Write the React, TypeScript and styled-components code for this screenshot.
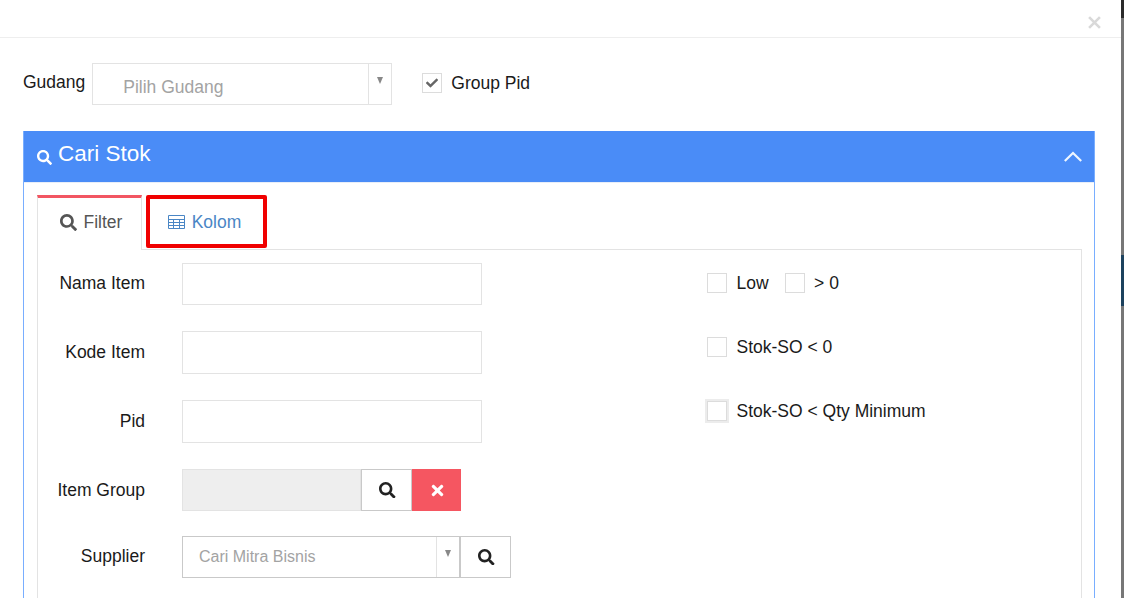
import { createGlobalStyle, styled } from "styled-components";
import { FaCheck, FaSearch, FaTimes } from "react-icons/fa";

const GlobalStyle = createGlobalStyle`
  html, body {
    margin: 0;
    height: 598px;
    overflow: hidden;
    background: #fff;
  }
  body {
    font-family: "Liberation Sans", Arial, sans-serif;
    font-size: 17.5px;
    color: #1a1a1a;
  }
`;

const textFields = [
  { name: "Nama Item", height: 42, line: 41 },
  { name: "Kode Item", height: 43, line: 42 },
  { name: "Pid", height: 43, line: 42 },
];

const stockFilters = [["Low", "> 0"], ["Stok-SO < 0"], ["Stok-SO < Qty Minimum"]];

export default function App() {
  return (
    <Page>
      <GlobalStyle />
      <Modal>
        <ModalHeader>
          <CloseIcon />
        </ModalHeader>
        <ModalBody>
          <TopRow>
            <TopLabel>Gudang</TopLabel>
            <Select $width={300} $muted>
              <SelectValue $indent={30} $size={17.5} $line={47}>
                Pilih Gudang
              </SelectValue>
              <Caret />
            </Select>
            <GroupOption>
              <CheckBox $dotted>
                <FaCheck />
              </CheckBox>
              Group Pid
            </GroupOption>
          </TopRow>

          <Panel>
            <PanelHeader>
              <PanelTitle>
                <FaSearch />
                Cari Stok
              </PanelTitle>
              <Chevron viewBox="0 0 18 11">
                <polyline points="0.8,10 9,2 17.2,10" />
              </Chevron>
            </PanelHeader>
            <PanelBody>
              <Tabs>
                <ActiveTab>
                  <FaSearch />
                  Filter
                </ActiveTab>
                <LinkTab>
                  <TableIcon />
                  Kolom
                </LinkTab>
              </Tabs>
              <TabContent>
                <FieldColumn>
                  {textFields.map((f) => (
                    <FieldRow key={f.name} $height={f.height} $line={f.line}>
                      <FieldLabel>{f.name}</FieldLabel>
                      <TextInput />
                    </FieldRow>
                  ))}
                  <FieldRow $height={42} $line={42}>
                    <FieldLabel>Item Group</FieldLabel>
                    <ReadOnlyInput />
                    <IconButton>
                      <FaSearch />
                    </IconButton>
                    <ClearButton>
                      <FaTimes />
                    </ClearButton>
                  </FieldRow>
                  <SupplierRow $height={42} $line={40}>
                    <FieldLabel>Supplier</FieldLabel>
                    <Select $width={278}>
                      <SelectValue $indent={16} $size={16} $line={39}>
                        Cari Mitra Bisnis
                      </SelectValue>
                      <Caret />
                    </Select>
                    <IconButton>
                      <FaSearch />
                    </IconButton>
                  </SupplierRow>
                </FieldColumn>
                <OptionColumn>
                  {stockFilters.map((group, i) => (
                    <OptionRow key={group[0]}>
                      {group.map((label) => (
                        <CheckOption key={label}>
                          <CheckBox $focused={i === 2} $dotted />
                          {label}
                        </CheckOption>
                      ))}
                    </OptionRow>
                  ))}
                </OptionColumn>
              </TabContent>
            </PanelBody>
          </Panel>
        </ModalBody>
      </Modal>
      <Scrollbar />
    </Page>
  );
}

function CloseIcon() {
  return (
    <Close viewBox="0 0 12 12">
      <path d="M1 1 L11 11 M11 1 L1 11" />
    </Close>
  );
}

function TableIcon() {
  return (
    <GridIcon viewBox="0 0 17 14">
      <path d="M.5.5h16v13H.5z" />
      <path d="M.5 4.5h16M.5 7.5h16M.5 10.5h16M5.5 4.5v9M11.5 4.5v9" />
    </GridIcon>
  );
}

function Caret() {
  return (
    <CaretBox>
      <span />
    </CaretBox>
  );
}

// styling
const Page = styled.div`
  display: flex;
  width: 1124px;
  height: 598px;
  overflow: hidden;
`;

const Modal = styled.div`
  width: 1121px;
  flex-shrink: 0;
`;

const Scrollbar = styled.div`
  width: 3px;
  height: 598px;
  background: linear-gradient(
    #2a2a2a 0 18px,
    #777 18px 255px,
    #1d425e 255px 306px,
    #777 306px
  );
`;

const ModalHeader = styled.div`
  height: 37px;
  border-bottom: 1px solid #eeeeee;
  display: flex;
  justify-content: flex-end;
  align-items: flex-end;
  padding-right: 20px;
`;

const Close = styled.svg`
  width: 13px;
  height: 13px;
  margin-bottom: 8px;
  fill: none;
  stroke: #d9d9d9;
  stroke-width: 2.4;
`;

const ModalBody = styled.div`
  padding: 25px 26px 0 23px;
`;

const TopRow = styled.div`
  display: flex;
  align-items: flex-start;
  height: 68px;
`;

const TopLabel = styled.div`
  line-height: 39px;
  margin-right: 7px;
`;

const Select = styled.div<{ $width: number; $muted?: boolean }>`
  display: flex;
  width: ${(p) => p.$width}px;
  height: 42px;
  box-sizing: border-box;
  border: 1px solid ${(p) => (p.$muted ? "#e3e3e3" : "#c9c9c9")};
  background: #fff;
`;

const SelectValue = styled.div<{ $indent: number; $size: number; $line: number }>`
  flex: 1;
  padding-left: ${(p) => p.$indent}px;
  font-size: ${(p) => p.$size}px;
  line-height: ${(p) => p.$line}px;
  color: #a3a3a3;
`;

const CaretBox = styled.div`
  width: 22px;
  border-left: 1px solid #e3e3e3;
  display: flex;
  justify-content: center;
  padding-top: 13px;
  & span {
    width: 0;
    height: 0;
    border-left: 3.5px solid transparent;
    border-right: 3.5px solid transparent;
    border-top: 7px solid #888;
  }
`;

const CheckOption = styled.label`
  display: flex;
  align-items: center;
  gap: 9.5px;
  height: 38px;
`;

const GroupOption = styled(CheckOption)`
  margin-left: 30px;
  gap: 9px;
  height: 40px;
`;

const CheckBox = styled.span<{ $focused?: boolean; $dotted?: boolean }>`
  display: flex;
  align-items: center;
  justify-content: center;
  width: 18px;
  height: 18px;
  border: 1px ${(p) => (p.$dotted ? "dotted" : "solid")} #c4c4c4;
  outline: 1px solid #dcdcdc;
  outline-offset: -1px;
  background: #fff;
  box-shadow: ${(p) => (p.$focused ? "0 0 0 2px #ececec" : "none")};
  color: #666;
  font-size: 12px;
`;

const Panel = styled.div`
  border: 1px solid #79aeff;
  border-top: 0;
  width: 1072px;
  box-sizing: border-box;
  height: 520px;
`;

const PanelHeader = styled.div`
  height: 51px;
  background: #4a8cf7;
  border-bottom: 1px solid #e8eef8;
  color: #fff;
  display: flex;
  align-items: center;
  justify-content: space-between;
  padding: 0 12px 0 13px;
`;

const PanelTitle = styled.div`
  display: flex;
  align-items: center;
  gap: 6px;
  font-size: 22.5px;
  padding-bottom: 5px;
  & svg {
    width: 15px;
    height: 15px;
    margin-top: 7px;
  }
`;

const Chevron = styled.svg`
  width: 18px;
  height: 11px;
  fill: none;
  stroke: #eef6ff;
  stroke-width: 2.2;
`;

const PanelBody = styled.div`
  padding: 12px 12px 0 13px;
`;

const Tabs = styled.div`
  display: flex;
  height: 54px;
`;

const ActiveTab = styled.div`
  width: 105px;
  box-sizing: border-box;
  height: 55px;
  border-top: 3px solid #f25662;
  border-left: 1px solid #e3e3e3;
  border-right: 1px solid #e3e3e3;
  background: #fff;
  display: flex;
  align-items: center;
  justify-content: center;
  gap: 7px;
  padding: 0 0 3px 3px;
  color: #555;
  position: relative;
  z-index: 1;
  & svg {
    width: 17px;
    height: 17px;
  }
`;

const LinkTab = styled.div`
  width: 121px;
  height: 53px;
  box-sizing: border-box;
  margin-left: 4px;
  border: 4px solid #f00000;
  border-radius: 2px;
  display: flex;
  align-items: center;
  justify-content: center;
  gap: 7px;
  padding: 1px 5px 0 0;
  color: #4a86c5;
`;

const GridIcon = styled.svg`
  width: 17px;
  height: 14px;
  margin-left: 1px;
  fill: none;
  stroke: #4a86c5;
  stroke-width: 1;
`;

const TabContent = styled.div`
  border: 1px solid #e3e3e3;
  display: flex;
  height: 440px;
  padding-top: 13px;
`;

const FieldColumn = styled.div`
  width: 669px;
  display: flex;
  flex-direction: column;
  gap: 26px;
`;

const FieldRow = styled.div<{ $height: number; $line: number }>`
  display: flex;
  align-items: stretch;
  height: ${(p) => p.$height}px;
  line-height: ${(p) => p.$line}px;
`;

const SupplierRow = styled(FieldRow)`
  margin-top: -1px;
`;

const FieldLabel = styled.div`
  width: 107px;
  margin-right: 37px;
  text-align: right;
`;

const TextInput = styled.div`
  width: 300px;
  box-sizing: border-box;
  border: 1px solid #e3e3e3;
  background: #fff;
`;

const ReadOnlyInput = styled(TextInput)`
  width: 179px;
  background: #eeeeee;
`;

const IconButton = styled.div`
  width: 51px;
  box-sizing: border-box;
  border: 1px solid #c9c9c9;
  background: #fff;
  color: #222;
  display: flex;
  align-items: center;
  justify-content: center;
  padding-left: 2px;
  font-size: 16.5px;
`;

const ClearButton = styled(IconButton)`
  width: 49px;
  border: 0;
  background: #f55661;
  color: #fff;
  font-size: 17px;
`;

const OptionColumn = styled.div`
  display: flex;
  flex-direction: column;
  gap: 26px;
  padding-top: 1px;
`;

const OptionRow = styled.div`
  display: flex;
  gap: 16px;
`;
